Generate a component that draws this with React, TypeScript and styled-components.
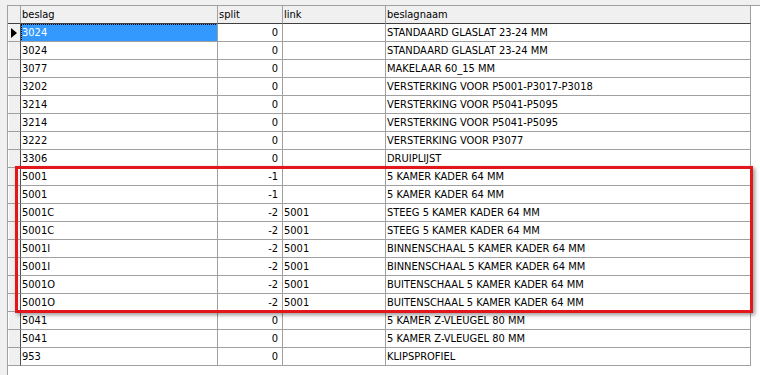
import React from "react";
import styled, { createGlobalStyle, css } from "styled-components";

const Global = createGlobalStyle`
  html, body { margin: 0; padding: 0; background: #ffffff; }
  body { font-family: "DejaVu Sans Condensed", "DejaVu Sans", sans-serif; font-size: 11px; color: #000; }
`;

const Frame = styled.div`
  position: relative;
  width: 760px;
  height: 375px;
  box-sizing: border-box;
  padding: 5px 0 0 7px;
  background: #f0f0f0;
  overflow: hidden;
`;

const GridArea = styled.div`
  height: 100%;
  background: #ffffff;
  border-left: 1px solid #a0a0a0;
  border-top: 1px solid #a0a0a0;
`;

const Table = styled.div`
  display: grid;
  grid-template-columns: 13px 197px 65px 103px 365px;
  grid-auto-rows: 18px;
`;

const HeaderCell = styled.div`
  box-sizing: border-box;
  background: #f0f0f0;
  border-right: 1px solid #a0a0a0;
  border-bottom: 1px solid #404040;
  padding: 0 1px;
  line-height: 17px;
  white-space: nowrap;
  overflow: hidden;
  &:last-child { border-right-color: #404040; }
`;

const RowHead = styled.div`
  position: relative;
  box-sizing: border-box;
  background: #f0f0f0;
  box-shadow: inset 1px 0 #ffffff;
  border-right: 1px solid #505050;
  border-bottom: 1px solid #a0a0a0;
`;

const Arrow = styled.span`
  position: absolute;
  left: 3px;
  top: 4px;
  width: 0;
  height: 0;
  border-top: 5px solid transparent;
  border-bottom: 5px solid transparent;
  border-left: 6px solid #000;
`;

const Cell = styled.div<{ $right?: boolean; $selected?: boolean }>`
  position: relative;
  box-sizing: border-box;
  border-right: 1px solid #a0a0a0;
  border-bottom: 1px solid #a0a0a0;
  padding: 0 ${(p) => (p.$right ? "4px" : "1px")} 0 1px;
  text-align: ${(p) => (p.$right ? "right" : "left")};
  line-height: 18px;
  white-space: nowrap;
  overflow: hidden;
  ${(p) =>
    p.$selected &&
    css`
      background: #3399ff;
      color: #ffffff;
      &::after {
        content: "";
        position: absolute;
        inset: 0 -1px -1px 0;
        border: 1px dotted #000;
      }
    `}
`;

const Highlight = styled.div`
  position: absolute;
  left: 15px;
  top: 166px;
  width: 738px;
  height: 147px;
  box-sizing: border-box;
  border: 3px solid #e3161c;
  box-shadow: 2px 2px 4px rgba(0, 0, 0, 0.4);
  pointer-events: none;
`;

const rows: [string, string, string, string][] = [
  ["3024", "0", "", "STANDAARD GLASLAT 23-24 MM"],
  ["3024", "0", "", "STANDAARD GLASLAT 23-24 MM"],
  ["3077", "0", "", "MAKELAAR 60_15 MM"],
  ["3202", "0", "", "VERSTERKING VOOR P5001-P3017-P3018"],
  ["3214", "0", "", "VERSTERKING VOOR P5041-P5095"],
  ["3214", "0", "", "VERSTERKING VOOR P5041-P5095"],
  ["3222", "0", "", "VERSTERKING VOOR P3077"],
  ["3306", "0", "", "DRUIPLIJST"],
  ["5001", "-1", "", "5 KAMER KADER 64 MM"],
  ["5001", "-1", "", "5 KAMER KADER 64 MM"],
  ["5001C", "-2", "5001", "STEEG 5 KAMER KADER 64 MM"],
  ["5001C", "-2", "5001", "STEEG 5 KAMER KADER 64 MM"],
  ["5001I", "-2", "5001", "BINNENSCHAAL 5 KAMER KADER 64 MM"],
  ["5001I", "-2", "5001", "BINNENSCHAAL 5 KAMER KADER 64 MM"],
  ["5001O", "-2", "5001", "BUITENSCHAAL 5 KAMER KADER 64 MM"],
  ["5001O", "-2", "5001", "BUITENSCHAAL 5 KAMER KADER 64 MM"],
  ["5041", "0", "", "5 KAMER Z-VLEUGEL 80 MM"],
  ["5041", "0", "", "5 KAMER Z-VLEUGEL 80 MM"],
  ["953", "0", "", "KLIPSPROFIEL"],
];

export default function App() {
  return (
    <>
      <Global />
      <Frame>
        <GridArea>
          <Table>
            <HeaderCell />
            <HeaderCell>beslag</HeaderCell>
            <HeaderCell>split</HeaderCell>
            <HeaderCell>link</HeaderCell>
            <HeaderCell>beslagnaam</HeaderCell>
            {rows.map((r, i) => (
              <React.Fragment key={i}>
                <RowHead>{i === 0 && <Arrow />}</RowHead>
                <Cell $selected={i === 0}>{r[0]}</Cell>
                <Cell $right>{r[1]}</Cell>
                <Cell>{r[2]}</Cell>
                <Cell>{r[3]}</Cell>
              </React.Fragment>
            ))}
          </Table>
        </GridArea>
        <Highlight />
      </Frame>
    </>
  );
}
